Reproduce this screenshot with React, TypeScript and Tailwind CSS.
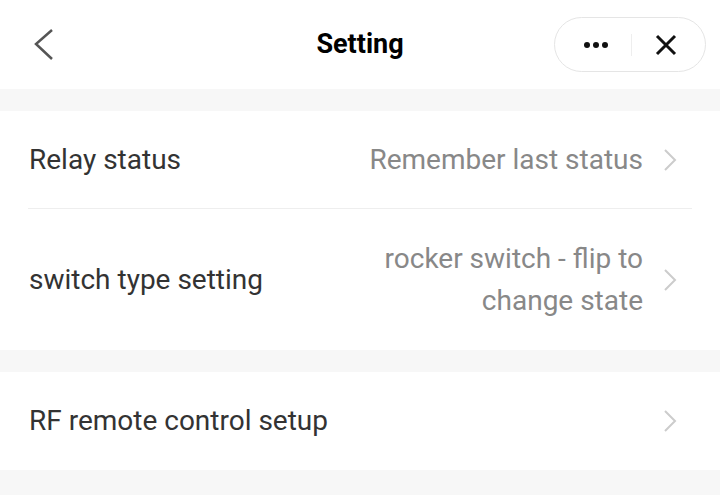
import React from 'react';

const Chevron: React.FC = () => (
    <svg width="16" height="24" viewBox="0 0 16 24" className="shrink-0">
        <path d="M3 2 L13 12 L3 22" fill="none" stroke="#cccccc" strokeWidth="2" />
    </svg>
);

const Row: React.FC<{ label: string; value?: string; className?: string; wrap?: boolean }> = ({ label, value, className, wrap }) => (
    <div className={`flex items-center justify-between pl-[29px] pr-[42px] ${className ?? ''}`}>
        <span className="text-[28px] text-[#333333] whitespace-nowrap">{label}</span>
        <div className="flex items-center gap-[19px]">
            {value && (
                <span className={`text-[28px] text-[#888888] text-right leading-[42px] ${wrap ? 'max-w-[266px]' : 'whitespace-nowrap'}`}>
                    {value}
                </span>
            )}
            <Chevron />
        </div>
    </div>
);

export default function App() {
    return (
        <div className="w-[720px] h-[495px] bg-[#f7f7f7] overflow-hidden" style={{ fontFamily: 'Roboto, "Noto Sans", sans-serif' }}>
            <div className="h-[89px] bg-white flex items-center justify-between pl-[33px] pr-[14px]">
                <svg width="22" height="34" viewBox="0 0 22 34">
                    <path d="M19 2 L3 16 L19 31" fill="none" stroke="#555555" strokeWidth="2.5" />
                </svg>
                <span className="absolute left-1/2 -translate-x-1/2 text-[27px] font-bold text-black">Setting</span>
                <div className="flex items-center h-[55px] w-[152px] rounded-full border border-[#e5e5e5]">
                    <div className="flex-1 flex items-center justify-center gap-[3px] pl-[6px]">
                        <span className="w-[6px] h-[6px] rounded-full bg-[#111]" />
                        <span className="w-[6px] h-[6px] rounded-full bg-[#111]" />
                        <span className="w-[6px] h-[6px] rounded-full bg-[#111]" />
                    </div>
                    <div className="w-px h-[22px] bg-[#eeeeee]" />
                    <div className="flex-1 flex items-center justify-center pr-[4px]">
                        <svg width="22" height="22" viewBox="0 0 22 22">
                            <path d="M2 2 L20 20 M20 2 L2 20" stroke="#111" strokeWidth="3" />
                        </svg>
                    </div>
                </div>
            </div>
            <div className="mt-[22px] bg-white">
                <Row label="Relay status" value="Remember last status" className="h-[97px]" />
                <div className="mx-[28px] h-px bg-[#eeeeee]" />
                <Row label="switch type setting" value="rocker switch - flip to change state" className="h-[141px]" wrap />
            </div>
            <div className="mt-[22px] bg-white">
                <Row label="RF remote control setup" className="h-[98px]" />
            </div>
        </div>
    );
}
